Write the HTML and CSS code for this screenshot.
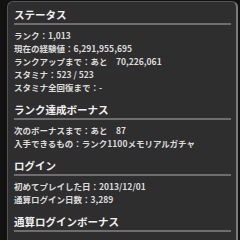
FILE: index.html
```html
<!DOCTYPE html>
<html lang="ja">
<head>
  <meta charset="UTF-8">
  <title>ステータス</title>
  <meta name="viewport" content="width=device-width, initial-scale=1">
  <link rel="stylesheet" href="styles.css">
</head>
<body>
  <div class="panel">
    <section class="section">
      <h2>ステータス</h2>
      <ul class="rows">
        <li>ランク：1,013</li>
        <li>現在の経験値：6,291,955,695</li>
        <li>ランクアップまで：あと　70,226,061</li>
        <li>スタミナ：523 / 523</li>
        <li>スタミナ全回復まで：-</li>
      </ul>
    </section>

    <section class="section">
      <h2>ランク達成ボーナス</h2>
      <ul class="rows">
        <li>次のボーナスまで：あと　87</li>
        <li>入手できるもの：ランク1100メモリアルガチャ</li>
      </ul>
    </section>

    <section class="section">
      <h2>ログイン</h2>
      <ul class="rows">
        <li>初めてプレイした日：2013/12/01</li>
        <li>通算ログイン日数：3,289</li>
      </ul>
    </section>

    <section class="section">
      <h2>通算ログインボーナス</h2>
    </section>
  </div>
</body>
</html>
```

FILE: styles.css
```css
body {
  font-family: "Noto Sans CJK JP", "Noto Sans", sans-serif;
  background-color: #121212;
  margin: 0;
  padding: 1px 0 0 7px;
  height: 240px;
  overflow: hidden;
}

.panel {
  width: 217px;
  min-height: 300px;
  background-color: #2e2e2e;
  border: 1px solid #555;
  border-right: 2px solid #7a7a7a;
  border-bottom: none;
  border-radius: 6px 6px 0 0;
  padding: 5px 5px 0 6px;
}

.section h2 {
  margin: 0;
  font-size: 10.5px;
  line-height: 16px;
  font-weight: bold;
  color: #f0f0f0;
  border-bottom: 2px solid #6e6e6e;
}

.section + .section {
  margin-top: 8px;
}

.rows {
  list-style: none;
  margin: 0;
  padding: 4px 0 0;
}

.rows li {
  font-size: 8.5px;
  line-height: 13px;
  font-weight: bold;
  color: #dcdcdc;
  white-space: nowrap;
}
```
